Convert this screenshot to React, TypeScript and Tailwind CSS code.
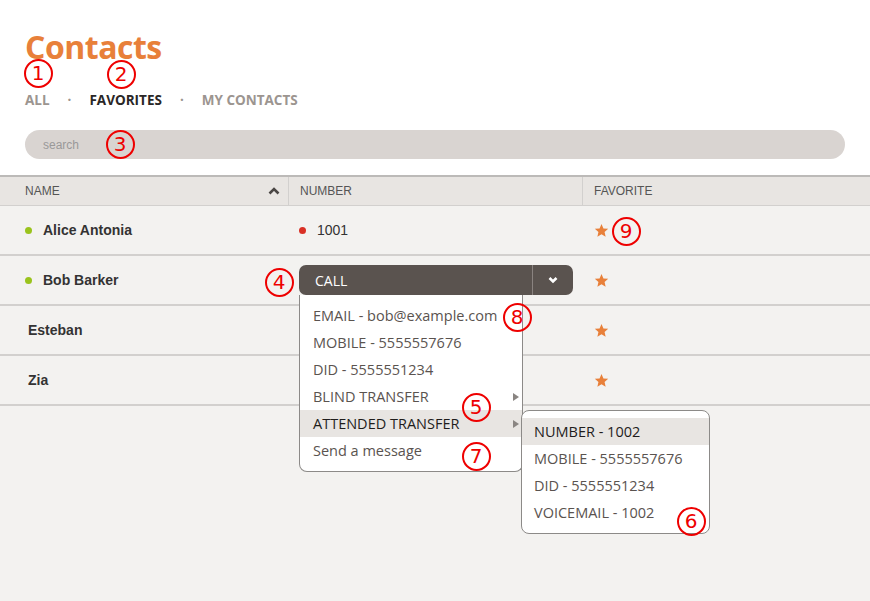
import React from 'react';

const ubuntu = { fontFamily: '"Open Sans", "DejaVu Sans", sans-serif' };
const arial = { fontFamily: '"Liberation Sans", Arial, sans-serif' };

type Contact = { name: string; online: boolean; number?: string };

const contacts: Contact[] = [
  { name: 'Alice Antonia', online: true, number: '1001' },
  { name: 'Bob Barker', online: true },
  { name: 'Esteban', online: false },
  { name: 'Zia', online: false },
];

const menuItems = [
  { label: 'EMAIL - bob@example.com' },
  { label: 'MOBILE - 5555557676' },
  { label: 'DID - 5555551234' },
  { label: 'BLIND TRANSFER', sub: true },
  { label: 'ATTENDED TRANSFER', sub: true, active: true },
  { label: 'Send a message' },
];

const subItems = ['NUMBER - 1002', 'MOBILE - 5555557676', 'DID - 5555551234', 'VOICEMAIL - 1002'];

const marks: { n: number; x: number; y: number }[] = [
  { n: 1, x: 38, y: 73 },
  { n: 2, x: 121, y: 74 },
  { n: 3, x: 120, y: 144 },
  { n: 4, x: 279, y: 282 },
  { n: 5, x: 476, y: 407 },
  { n: 6, x: 691, y: 521 },
  { n: 7, x: 476, y: 456 },
  { n: 8, x: 517, y: 317 },
  { n: 9, x: 626, y: 231 },
];

function Star() {
  return (
    <svg width="15" height="15" viewBox="0 0 24 24" className="text-[#e8803a]">
      <path
        fill="currentColor"
        d="M12 1.5l3.1 7.1 7.6.7-5.8 5.1 1.7 7.6L12 18l-6.6 4 1.7-7.6-5.8-5.1 7.6-.7z"
      />
    </svg>
  );
}

function Arrow() {
  return (
    <svg width="6" height="8" viewBox="0 0 6 8" className="absolute right-[3px] top-1/2 -translate-y-1/2">
      <path d="M0 0L6 4L0 8z" fill="#8a8582" />
    </svg>
  );
}

function CallMenu() {
  return (
    <div className="relative w-[274px]">
      <div className="flex h-[30px] items-stretch rounded-[7px] bg-[#5a534f] text-white" style={ubuntu}>
        <div className="flex flex-1 items-center pl-4 text-[14px]">CALL</div>
        <div className="flex w-[41px] items-center justify-center border-l border-[#8a8380]">
          <svg width="10" height="8" viewBox="0 0 10 8">
            <path d="M1.5 2L5 5.5L8.5 2" fill="none" stroke="white" strokeWidth="2.6" />
          </svg>
        </div>
      </div>
      <div
        className="absolute left-0 top-[30px] z-10 w-[224px] rounded-b-[8px] border border-t-0 border-[#8c8a88] bg-white py-[7px] text-[14.5px] text-[#5a534f]"
        style={ubuntu}
      >
        {menuItems.map((item) => (
          <div
            key={item.label}
            className={`relative flex h-[27px] items-center pl-[13px] ${
              item.active ? 'bg-[#e8e5e2] text-[#1f1d1c]' : ''
            }`}
          >
            {item.label}
            {item.sub && <Arrow />}
            {item.active && (
              <div className="absolute left-[221px] top-0 w-[189px] rounded-[8px] border border-[#8c8a88] bg-white py-[7px] text-[#5a534f]">
                {subItems.map((s, i) => (
                  <div
                    key={s}
                    className={`flex h-[27px] items-center pl-[12px] ${i === 0 ? 'bg-[#e8e5e2] text-[#1f1d1c]' : ''}`}
                  >
                    {s}
                  </div>
                ))}
              </div>
            )}
          </div>
        ))}
      </div>
    </div>
  );
}

export default function App() {
  return (
    <div className="relative h-[601px] w-[870px] overflow-hidden bg-[#f3f2f0]">
      <div className="bg-white px-[25px] pb-4 pt-[27px]">
        <h1 className="text-[32px] font-bold leading-[40px] tracking-[-0.5px] text-[#e8803a]" style={ubuntu}>
          Contacts
        </h1>
        <div className="mt-[23px] flex items-center text-[13.5px] font-bold leading-[20px]" style={ubuntu}>
          <span className="text-[#9c9590]">ALL</span>
          <span className="mx-[18px] text-[#9c9590]">·</span>
          <span className="text-[#2a2726]">FAVORITES</span>
          <span className="mx-[18px] text-[#9c9590]">·</span>
          <span className="text-[#9c9590]">MY CONTACTS</span>
        </div>
        <div className="mt-[20px] flex h-[29px] items-center rounded-full bg-[#d9d4d1] pl-[18px] text-[12px] text-[#999]" style={arial}>
          search
        </div>
      </div>

      <div style={arial}>
        <div className="flex h-[31px] border-t-2 border-b border-t-[#bcbab8] border-b-[#d2d0ce] bg-[#e8e5e2] text-[12px] text-[#555]">
          <div className="flex w-[289px] items-center justify-between border-r border-[#d2d0ce] pl-[25px] pr-[8px]">
            NAME
            <svg width="12" height="8" viewBox="0 0 12 8">
              <path d="M1.5 6.5L6 2L10.5 6.5" fill="none" stroke="#4a4644" strokeWidth="2.6" />
            </svg>
          </div>
          <div className="flex w-[294px] items-center border-r border-[#d2d0ce] pl-[11px]">NUMBER</div>
          <div className="flex flex-1 items-center pl-[11px]">FAVORITE</div>
        </div>
        {contacts.map((c) => (
          <div key={c.name} className="flex h-[50px] border-b-2 border-[#d2d0ce] text-[14px]">
            <div className="flex w-[289px] items-center pl-[25px] font-bold text-[#333]">
              {c.online ? (
                <>
                  <span className="mr-[11px] h-[7px] w-[7px] rounded-full bg-[#9ac31c]" />
                  {c.name}
                </>
              ) : (
                <span className="pl-[3px]">{c.name}</span>
              )}
            </div>
            <div className="flex w-[294px] items-center pl-[10px] text-[#333]">
              {c.number && (
                <>
                  <span className="mr-[11px] h-[7px] w-[7px] rounded-full bg-[#d93025]" />
                  {c.number}
                </>
              )}
              {c.name === 'Bob Barker' && <CallMenu />}
            </div>
            <div className="flex flex-1 items-center pl-[11px]">
              <Star />
            </div>
          </div>
        ))}
      </div>

      {marks.map((m) => (
        <div
          key={m.n}
          className="absolute z-20 flex h-[29px] w-[29px] items-center justify-center rounded-full border-2 border-[#ee0000] text-[20px] leading-none text-[#ee0000]"
          style={{ left: m.x - 14.5, top: m.y - 14.5, fontFamily: '"DejaVu Sans", sans-serif' }}
        >
          {m.n}
        </div>
      ))}
    </div>
  );
}
